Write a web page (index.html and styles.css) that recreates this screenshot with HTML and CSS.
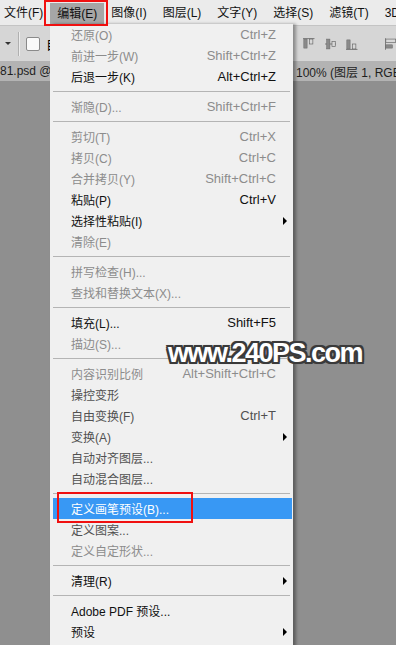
FILE: index.html
```html
<!DOCTYPE html>
<html lang="zh-CN">

<head>
    <meta charset="UTF-8">
    <meta name="viewport" content="width=device-width, initial-scale=1.0">
    <title>编辑菜单</title>
    <link rel="stylesheet" href="styles.css">
</head>

<body>
    <div class="app">
        <div class="menubar">
            <span class="menubar-item first">文件(F)</span>
            <span class="menubar-item active">编辑(E)</span>
            <span class="menubar-item">图像(I)</span>
            <span class="menubar-item wide">图层(L)</span>
            <span class="menubar-item wide">文字(Y)</span>
            <span class="menubar-item wide">选择(S)</span>
            <span class="menubar-item wide">滤镜(T)</span>
            <span class="menubar-item wide">3D</span>
        </div>

        <div class="toolbar">
            <span class="caret"></span>
            <span class="tool-sep"></span>
            <span class="checkbox"></span>
            <span class="tool-label">自动选择</span>
            <div class="align-icons">
                <svg width="14" height="14" viewBox="0 0 14 14">
                    <rect x="0" y="0" width="14" height="1" fill="#6a6a6a" />
                    <rect x="1" y="1" width="4" height="11" fill="#8a8a8a" stroke="#666" stroke-width="0.6" />
                    <rect x="8" y="1" width="4" height="6" fill="#d8d8d8" stroke="#666" stroke-width="0.8" />
                </svg>
                <svg width="14" height="14" viewBox="0 0 14 14">
                    <rect x="0" y="6.5" width="14" height="1" fill="#6a6a6a" />
                    <rect x="2" y="1" width="4" height="12" fill="#8a8a8a" stroke="#666" stroke-width="0.6" />
                    <rect x="8.5" y="4" width="4" height="6" fill="#d8d8d8" stroke="#666" stroke-width="0.8" />
                </svg>
                <svg width="14" height="14" viewBox="0 0 14 14">
                    <rect x="0" y="13" width="14" height="1" fill="#6a6a6a" />
                    <rect x="1" y="2" width="4" height="11" fill="#8a8a8a" stroke="#666" stroke-width="0.6" />
                    <rect x="8" y="7" width="4" height="6" fill="#d8d8d8" stroke="#666" stroke-width="0.8" />
                </svg>
                <svg class="align-left" width="14" height="14" viewBox="0 0 14 14">
                    <rect x="0" y="0" width="1" height="14" fill="#6a6a6a" />
                    <rect x="1" y="1" width="12" height="4" fill="#d8d8d8" stroke="#666" stroke-width="0.8" />
                    <rect x="1" y="8" width="8" height="4" fill="#8a8a8a" stroke="#666" stroke-width="0.6" />
                </svg>
            </div>
        </div>

        <div class="tabbar">
            <span class="tab-name">81.psd @</span>
            <span class="tab-info">100% (图层 1, RGB/8)</span>
        </div>

        <div class="canvas"></div>

        <!-- Edit dropdown -->
        <div class="dropdown">
            <div class="item off"><span>还原(O)</span><span class="key">Ctrl+Z</span></div>
            <div class="item off"><span>前进一步(W)</span><span class="key">Shift+Ctrl+Z</span></div>
            <div class="item"><span>后退一步(K)</span><span class="key">Alt+Ctrl+Z</span></div>
            <div class="sep"></div>
            <div class="item off"><span>渐隐(D)...</span><span class="key">Shift+Ctrl+F</span></div>
            <div class="sep"></div>
            <div class="item off"><span>剪切(T)</span><span class="key">Ctrl+X</span></div>
            <div class="item off"><span>拷贝(C)</span><span class="key">Ctrl+C</span></div>
            <div class="item off"><span>合并拷贝(Y)</span><span class="key">Shift+Ctrl+C</span></div>
            <div class="item"><span>粘贴(P)</span><span class="key">Ctrl+V</span></div>
            <div class="item"><span>选择性粘贴(I)</span><span class="arrow"></span></div>
            <div class="item off"><span>清除(E)</span></div>
            <div class="sep"></div>
            <div class="item off"><span>拼写检查(H)...</span></div>
            <div class="item off"><span>查找和替换文本(X)...</span></div>
            <div class="sep"></div>
            <div class="item"><span>填充(L)...</span><span class="key">Shift+F5</span></div>
            <div class="item off"><span>描边(S)...</span></div>
            <div class="sep"></div>
            <div class="item off"><span>内容识别比例</span><span class="key">Alt+Shift+Ctrl+C</span></div>
            <div class="item dim"><span>操控变形</span></div>
            <div class="item dim"><span>自由变换(F)</span><span class="key">Ctrl+T</span></div>
            <div class="item dim"><span>变换(A)</span><span class="arrow"></span></div>
            <div class="item dim"><span>自动对齐图层...</span></div>
            <div class="item dim"><span>自动混合图层...</span></div>
            <div class="sep"></div>
            <div class="item selected"><span>定义画笔预设(B)...</span></div>
            <div class="item dim"><span>定义图案...</span></div>
            <div class="item off"><span>定义自定形状...</span></div>
            <div class="sep"></div>
            <div class="item"><span>清理(R)</span><span class="arrow"></span></div>
            <div class="sep"></div>
            <div class="item"><span>Adobe PDF 预设...</span></div>
            <div class="item"><span>预设</span><span class="arrow"></span></div>
        </div>

        <!-- Red annotation boxes -->
        <div class="mark mark-menu"></div>
        <div class="mark mark-item"></div>

        <div class="watermark">www.240PS.com</div>
    </div>
</body>

</html>
```

FILE: styles.css
```css
/* Global */
* {
    box-sizing: border-box;
    margin: 0;
    padding: 0;
}

body {
    font-family: 'Liberation Sans', 'Noto Sans CJK SC', sans-serif;
    font-size: 12px;
    color: #000;
    background: #8f8f8f;
}

.app {
    position: relative;
    width: 396px;
    height: 645px;
    overflow: hidden;
    display: flex;
    flex-direction: column;
}

/* Menu bar */
.menubar {
    height: 25px;
    background: #ebebeb;
    display: flex;
    align-items: center;
    white-space: nowrap;
}

.menubar-item {
    height: 22px;
    line-height: 22px;
    padding: 0 7px;
    color: #111;
}

.menubar-item.first {
    padding-left: 4px;
}

.menubar-item.wide {
    margin-left: 2px;
}

.menubar-item.active {
    background: #a6a6a6;
    margin-top: 2px;
}

/* Options toolbar */
.toolbar {
    height: 36px;
    background: #d6d6d6;
    border-top: 1px solid #c4c4c4;
    display: flex;
    align-items: center;
}

.caret {
    width: 0;
    height: 0;
    margin-left: 5px;
    border-left: 3px solid transparent;
    border-right: 3px solid transparent;
    border-top: 3px solid #333;
}

.tool-sep {
    width: 1px;
    height: 24px;
    margin-left: 7px;
    background: #b0b0b0;
    box-shadow: 1px 0 0 #ececec;
}

.checkbox {
    width: 14px;
    height: 14px;
    margin-left: 7px;
    background: #fafafa;
    border: 1px solid #8a8a8a;
    border-radius: 2px;
}

.tool-label {
    margin-left: 6px;
    font-size: 13px;
    white-space: nowrap;
}

.align-icons {
    margin-left: auto;
    display: flex;
    gap: 10px;
    align-items: center;
    width: 93px;
}

.align-icons .align-left {
    margin-left: 17px;
}

/* Document tab */
.tabbar {
    height: 20px;
    background: #b3b3b3;
    display: grid;
    grid-template-columns: 296px auto;
    align-items: center;
    font-size: 12px;
    color: #1e1e1e;
    white-space: nowrap;
    overflow: hidden;
}

.canvas {
    flex: 1;
    background: #8f8f8f;
}

/* Dropdown menu */
.dropdown {
    position: absolute;
    left: 50px;
    top: 24px;
    width: 243px;
    height: 625px;
    padding: 0 1px 0 3px;
    background: #f0f0f0;
    box-shadow: 3px 0 3px rgba(0, 0, 0, 0.35);
}

.item {
    height: 21px;
    padding: 0 16px 0 18px;
    display: flex;
    align-items: center;
    justify-content: space-between;
    white-space: nowrap;
    color: #111;
}

.item.off {
    color: #8c8c8c;
}

.item.dim {
    color: #505050;
}

.item.selected {
    background: #3898f4;
    color: #fff;
}

.item .key {
    font-size: 13px;
}

.arrow {
    width: 0;
    height: 0;
    margin-right: -11px;
    border-top: 4px solid transparent;
    border-bottom: 4px solid transparent;
    border-left: 4px solid #000;
}

.sep {
    height: 1px;
    margin: 4px 2px 4px 0;
    background: #b4b4b4;
}

/* Annotations */
.mark {
    position: absolute;
    border: 2px solid #f01010;
}

.mark-menu {
    left: 44px;
    top: 0;
    width: 64px;
    height: 26px;
}

.mark-item {
    left: 57px;
    top: 492px;
    width: 136px;
    height: 31px;
}

.watermark {
    position: absolute;
    left: 168px;
    top: 338px;
    font-family: 'Liberation Sans', sans-serif;
    font-weight: bold;
    font-size: 27px;
    letter-spacing: -1.5px;
    color: #fff;
    text-shadow:
        2px 0 0 #3a3a3a, -2px 0 0 #3a3a3a, 0 2px 0 #3a3a3a, 0 -2px 0 #3a3a3a,
        2px 2px 0 #3a3a3a, -2px 2px 0 #3a3a3a, 2px -2px 0 #3a3a3a, -2px -2px 0 #3a3a3a,
        0 0 3px #3a3a3a;
}
```
